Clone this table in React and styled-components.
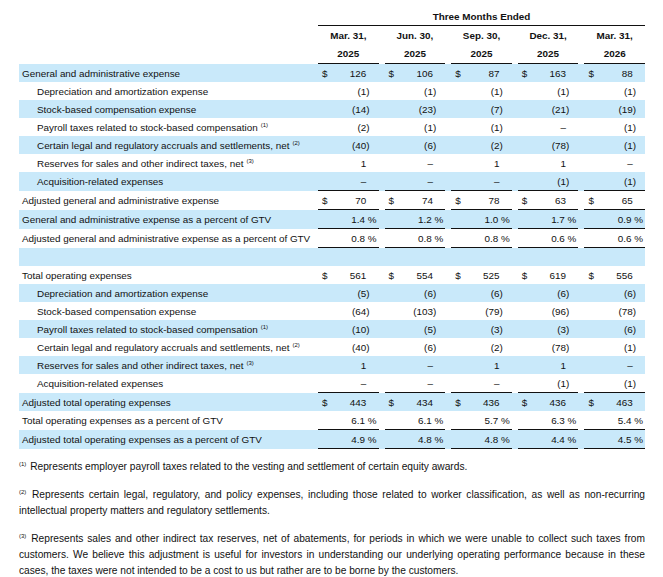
import React from "react";
import styled, { createGlobalStyle } from "styled-components";

const GlobalStyle = createGlobalStyle`
  body {
    margin: 0;
    background: #fff;
    color: #111;
    font-family: "Liberation Sans", Arial, sans-serif;
  }
`;

const Page = styled.div`
  padding: 8px 0 0 19px;
  width: 626px;
  font-size: 9.9px;
`;

const Grid = styled.div`
  display: grid;
  grid-template-columns: 293px repeat(5, 1fr);
  column-gap: 6px;
  background: ${(p) => (p.$shaded ? "#c9e9fa" : "transparent")};
`;

const HeadGrid = styled(Grid)`
  font-weight: bold;
`;

const Spanned = styled.div`
  grid-column: 2 / -1;
  height: 17px;
  line-height: 17px;
  text-align: center;
  border-bottom: 1px solid #111;
`;

const ColHead = styled.div`
  text-align: center;
  line-height: 18px;
  padding-top: 1px;
  border-bottom: 1px solid #111;
`;

const Label = styled.div`
  display: flex;
  align-items: center;
  height: 18px;
  padding-left: ${(p) => (p.$indent ? "18px" : "3px")};
  white-space: nowrap;
`;

const Sup = styled.span`
  font-size: 6px;
  line-height: 0;
  vertical-align: 4px;
  margin-left: 3px;
`;

const Value = styled.div`
  display: flex;
  align-items: center;
  justify-content: space-between;
  height: 18px;
  padding: 0 ${(p) => (p.$pct ? "2px" : "9px")} 0 4px;
  border-bottom: ${(p) => (p.$line ? "1px solid #111" : "none")};
`;

const Ghost = styled.span`
  visibility: hidden;
`;

const Notes = styled.div`
  margin-top: 10px;
  font-size: 10.2px;
  line-height: 16px;
  text-align: justify;
`;

const Note = styled.p`
  margin: 0 0 12px;
`;

const NoteMark = styled.span`
  font-size: 6px;
  line-height: 0;
  vertical-align: 4px;
  margin-right: 1px;
`;

const cols = [
  ["Mar. 31,", "2025"],
  ["Jun. 30,", "2025"],
  ["Sep. 30,", "2025"],
  ["Dec. 31,", "2025"],
  ["Mar. 31,", "2026"],
];

const rows = [
  { label: "General and administrative expense", dollar: true, vals: ["126", "106", "87", "163", "88"] },
  { label: "Depreciation and amortization expense", indent: true, vals: ["(1)", "(1)", "(1)", "(1)", "(1)"] },
  { label: "Stock-based compensation expense", indent: true, vals: ["(14)", "(23)", "(7)", "(21)", "(19)"] },
  { label: "Payroll taxes related to stock-based compensation", note: "(1)", indent: true, vals: ["(2)", "(1)", "(1)", "–", "(1)"] },
  { label: "Certain legal and regulatory accruals and settlements, net", note: "(2)", indent: true, vals: ["(40)", "(6)", "(2)", "(78)", "(1)"] },
  { label: "Reserves for sales and other indirect taxes, net", note: "(3)", indent: true, vals: ["1", "–", "1", "1", "–"] },
  { label: "Acquisition-related expenses", indent: true, line: true, vals: ["–", "–", "–", "(1)", "(1)"] },
  { label: "Adjusted general and administrative expense", dollar: true, line: true, vals: ["70", "74", "78", "63", "65"] },
  { label: "General and administrative expense as a percent of GTV", pct: true, line: true, vals: ["1.4 %", "1.2 %", "1.0 %", "1.7 %", "0.9 %"] },
  { label: "Adjusted general and administrative expense as a percent of GTV", pct: true, line: true, vals: ["0.8 %", "0.8 %", "0.8 %", "0.6 %", "0.6 %"] },
  { blank: true },
  { label: "Total operating expenses", dollar: true, vals: ["561", "554", "525", "619", "556"] },
  { label: "Depreciation and amortization expense", indent: true, vals: ["(5)", "(6)", "(6)", "(6)", "(6)"] },
  { label: "Stock-based compensation expense", indent: true, vals: ["(64)", "(103)", "(79)", "(96)", "(78)"] },
  { label: "Payroll taxes related to stock-based compensation", note: "(1)", indent: true, vals: ["(10)", "(5)", "(3)", "(3)", "(6)"] },
  { label: "Certain legal and regulatory accruals and settlements, net", note: "(2)", indent: true, vals: ["(40)", "(6)", "(2)", "(78)", "(1)"] },
  { label: "Reserves for sales and other indirect taxes, net", note: "(3)", indent: true, vals: ["1", "–", "1", "1", "–"] },
  { label: "Acquisition-related expenses", indent: true, line: true, vals: ["–", "–", "–", "(1)", "(1)"] },
  { label: "Adjusted total operating expenses", dollar: true, vals: ["443", "434", "436", "436", "463"] },
  { label: "Total operating expenses as a percent of GTV", pct: true, line: true, vals: ["6.1 %", "6.1 %", "5.7 %", "6.3 %", "5.4 %"] },
  { label: "Adjusted total operating expenses as a percent of GTV", pct: true, line: true, vals: ["4.9 %", "4.8 %", "4.8 %", "4.4 %", "4.5 %"] },
];

const Amount = ({ v, pct }) => {
  if (pct) return <span>{v}</span>;
  const neg = v.endsWith(")");
  return (
    <span>
      {v}
      {!neg && <Ghost>)</Ghost>}
    </span>
  );
};

const App = () => {
  return (
    <Page>
      <GlobalStyle />
      <HeadGrid>
        <div />
        <Spanned>Three Months Ended</Spanned>
      </HeadGrid>
      <HeadGrid>
        <div />
        {cols.map((c, i) => (
          <ColHead key={i}>
            {c[0]}
            <br />
            {c[1]}
          </ColHead>
        ))}
      </HeadGrid>

      {rows.map((r, i) => (
        <Grid key={i} $shaded={i % 2 === 0}>
          {r.blank ? (
            <Label />
          ) : (
            <>
              <Label $indent={r.indent}>
                <span>
                  {r.label}
                  {r.note && <Sup>{r.note}</Sup>}
                </span>
              </Label>
              {r.vals.map((v, j) => (
                <Value key={j} $line={r.line} $pct={r.pct}>
                  <span>{r.dollar ? "$" : ""}</span>
                  <Amount v={v} pct={r.pct} />
                </Value>
              ))}
            </>
          )}
        </Grid>
      ))}

      <Notes>
        <Note>
          <NoteMark>(1)</NoteMark> Represents employer payroll taxes related to the vesting and settlement of certain equity awards.
        </Note>
        <Note>
          <NoteMark>(2)</NoteMark> Represents certain legal, regulatory, and policy expenses, including those related to worker classification, as well as non-recurring intellectual property matters and regulatory settlements.
        </Note>
        <Note>
          <NoteMark>(3)</NoteMark> Represents sales and other indirect tax reserves, net of abatements, for periods in which we were unable to collect such taxes from customers. We believe this adjustment is useful for investors in understanding our underlying operating performance because in these cases, the taxes were not intended to be a cost to us but rather are to be borne by the customers.
        </Note>
      </Notes>
    </Page>
  );
};

export default App;
